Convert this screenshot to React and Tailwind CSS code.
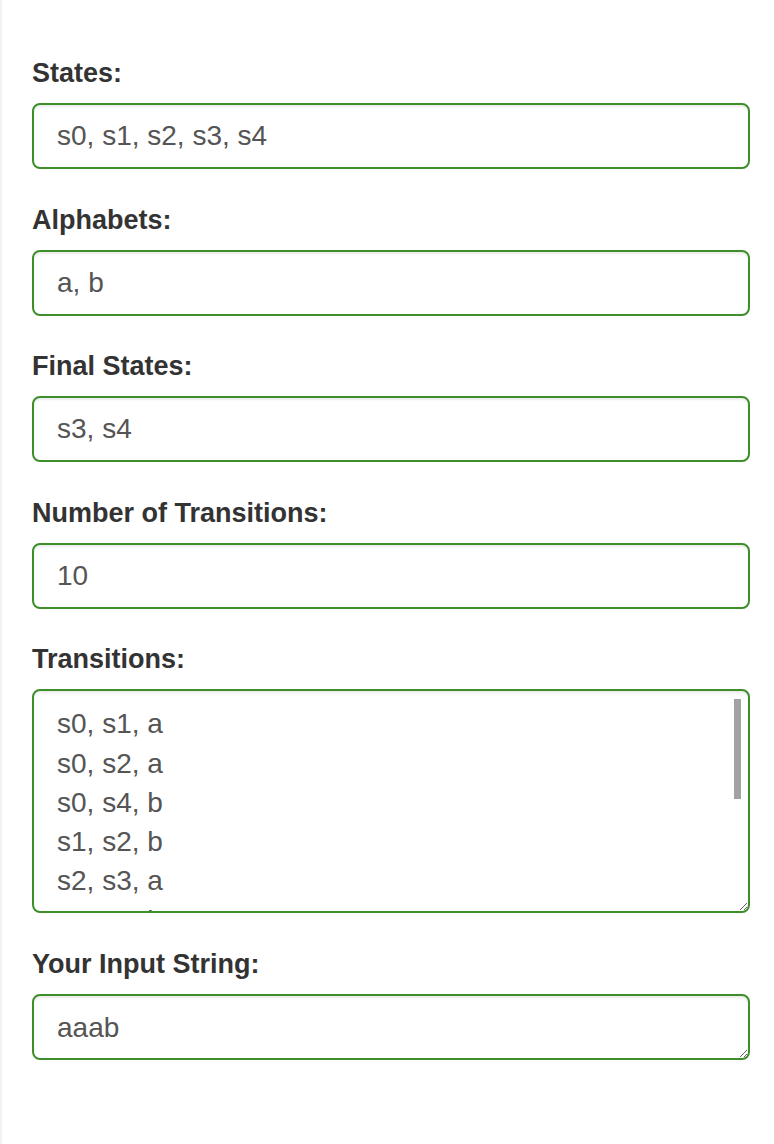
const font = { fontFamily: '"Liberation Sans", Arial, Helvetica, sans-serif' };

const transitions = [
  's0, s1, a',
  's0, s2, a',
  's0, s4, b',
  's1, s2, b',
  's2, s3, a',
  's2, s4, b',
  's3, s3, a',
  's3, s4, b',
  's4, s4, a',
  's4, s3, b',
].join('\n');

const boxClass =
  'block w-full border-2 border-[#3e8e2c] rounded-[8px] bg-white text-[28px] text-[#555555] outline-none shadow-[inset_0_2px_2px_rgba(0,0,0,0.075)]';

function Label({ children }) {
  return (
    <label className="block text-[27px] leading-[40px] font-bold text-[#333333] mb-[10px]">
      {children}
    </label>
  );
}

function Field({ label, value }) {
  return (
    <div className="mb-[30.5px]">
      <Label>{label}</Label>
      <input type="text" defaultValue={value} className={`${boxClass} h-[66px] px-[23px]`} style={font} />
    </div>
  );
}

export default function App() {
  return (
    <div className="min-h-screen bg-white border-l-[2px] border-[#f2f2f2]" style={font}>
      <form className="pt-[53.4px] pl-[30px] pr-[24px]" onSubmit={(e) => e.preventDefault()}>
        <Field label="States:" value="s0, s1, s2, s3, s4" />
        <Field label="Alphabets:" value="a, b" />
        <Field label="Final States:" value="s3, s4" />
        <Field label="Number of Transitions:" value="10" />

        <div className="mb-[30.5px]">
          <Label>Transitions:</Label>
          <div className="relative">
            <textarea
              defaultValue={transitions}
              className={`${boxClass} h-[224px] px-[23px] pt-[13px] pb-[12px] leading-[39.25px] overflow-hidden`}
              style={font}
            />
            {/* overlay scrollbar thumb */}
            <div className="absolute top-[10px] right-[9px] w-[7px] h-[100px] bg-[#a2a2a2]" />
          </div>
        </div>

        <div>
          <Label>Your Input String:</Label>
          <textarea
            defaultValue="aaab"
            className={`${boxClass} h-[66px] px-[23px] pt-[12px] leading-[39.3px] overflow-hidden`}
            style={font}
          />
        </div>
      </form>
    </div>
  );
}
